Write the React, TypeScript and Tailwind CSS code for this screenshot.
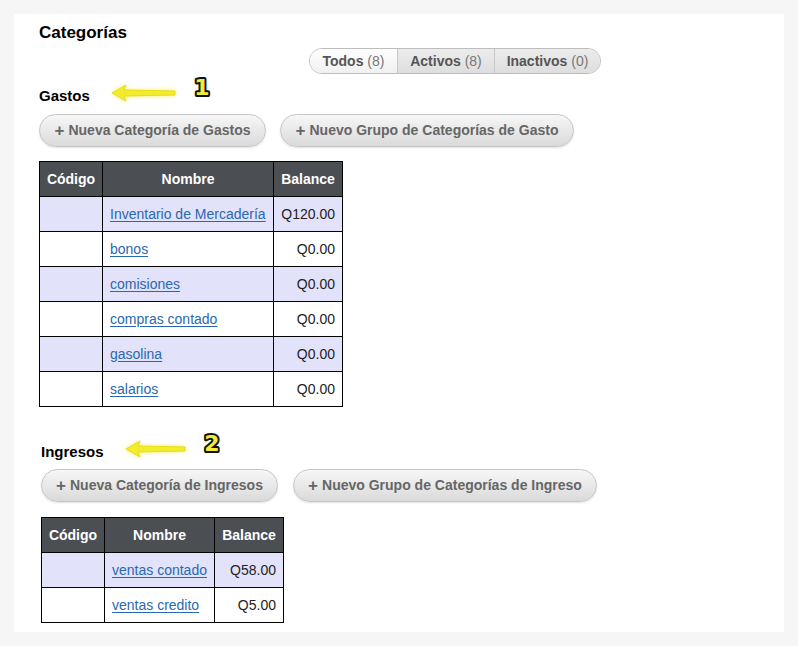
const font = { fontFamily: '"Liberation Sans", Arial, sans-serif' };

type Row = { nombre: string; balance: string };

const gastos: Row[] = [
  { nombre: "Inventario de Mercadería", balance: "Q120.00" },
  { nombre: "bonos", balance: "Q0.00" },
  { nombre: "comisiones", balance: "Q0.00" },
  { nombre: "compras contado", balance: "Q0.00" },
  { nombre: "gasolina", balance: "Q0.00" },
  { nombre: "salarios", balance: "Q0.00" },
];

const ingresos: Row[] = [
  { nombre: "ventas contado", balance: "Q58.00" },
  { nombre: "ventas credito", balance: "Q5.00" },
];

function Arrow({ label, width }: { label: string; width: number }) {
  return (
    <div className="flex items-center">
      <svg width={width} height="22" viewBox={`0 0 ${width} 22`} className="[filter:drop-shadow(0_0_2px_#f4ee60)]">
        <path
          d={`M2 11 L16 3 L14 8 L${width - 3} 9 L${width - 3} 13 L14 14 L16 19 Z`}
          fill="#f3ec2c"
          stroke="#e8dc1c"
          strokeWidth="1"
          strokeLinejoin="round"
        />
      </svg>
      <svg width="24" height="26" viewBox="0 0 24 26" className="ml-[12px] -mt-[12px]">
        <text
          x="12"
          y="21"
          textAnchor="middle"
          fontFamily='"DejaVu Sans", "Liberation Sans", sans-serif'
          fontWeight="bold"
          fontSize="22"
          fill="#f3ea3a"
          stroke="#111"
          strokeWidth="4"
          paintOrder="stroke"
          strokeLinejoin="round"
        >
          {label}
        </text>
      </svg>
    </div>
  );
}

function ActionButton({ children, w }: { children: React.ReactNode; w: string }) {
  return (
    <button
      className={`${w} h-[33px] rounded-full border border-[#c6c6c6] bg-gradient-to-b from-[#f7f7f7] to-[#dadada] text-[14px] font-bold text-[#666] shadow-[0_1px_2px_rgba(0,0,0,0.12)] flex items-center justify-center`}
    >
      <span className="text-[17px] leading-none mr-[4px] -mt-[1px]">+</span>
      {children}
    </button>
  );
}

function CatTable({ rows, nombreW }: { rows: Row[]; nombreW: string }) {
  return (
    <table className="border-collapse text-[14px]">
      <thead>
        <tr className="bg-[#4b4f54] text-white h-[35px]">
          <th className="w-[63px] border border-black font-bold px-[5px]">Código</th>
          <th className={`${nombreW} border border-black font-bold`}>Nombre</th>
          <th className="w-[69px] border border-black font-bold px-[6px]">Balance</th>
        </tr>
      </thead>
      <tbody>
        {rows.map((r, i) => (
          <tr key={r.nombre} className={`h-[35px] ${i % 2 === 0 ? "bg-[#e2e2fb]" : "bg-white"}`}>
            <td className="border border-black"></td>
            <td className="border border-black px-[7px]">
              <a href="#" className="text-[#2a69ad] underline underline-offset-[2px]">
                {r.nombre}
              </a>
            </td>
            <td className="border border-black px-[7px] text-right text-[#222]">{r.balance}</td>
          </tr>
        ))}
      </tbody>
    </table>
  );
}

export default function App() {
  return (
    <div className="min-h-[646px] bg-[#f6f6f6] pt-[14px] pl-[14px]" style={font}>
      <div className="w-[770px] h-[618px] bg-white pl-[25px] pt-[9px]">
        {/* Title */}
        <h1 className="text-[17px] font-bold text-black leading-[20px]">Categorías</h1>

        {/* Filter */}
        <div className="ml-[270px] mt-[5px] flex h-[26px] w-[292px] rounded-full border border-[#bdbdbd] overflow-hidden text-[14px] text-[#555]">
          <div className="w-[88px] flex items-center justify-center bg-gradient-to-b from-white to-[#f0f0f0] border-r border-[#c8c8c8]">
            <b>Todos</b>&nbsp;<span className="text-[#777]">(8)</span>
          </div>
          <div className="w-[97px] flex items-center justify-center bg-gradient-to-b from-[#ececec] to-[#dedede] border-r border-[#c8c8c8]">
            <b>Activos</b>&nbsp;<span className="text-[#777]">(8)</span>
          </div>
          <div className="flex-1 flex items-center justify-center bg-gradient-to-b from-[#ececec] to-[#dedede]">
            <b>Inactivos</b>&nbsp;<span className="text-[#777]">(0)</span>
          </div>
        </div>

        {/* Gastos */}
        <div className="mt-[3px] flex items-end h-[28px]">
          <h2 className="text-[15px] font-bold text-black leading-[18px]">Gastos</h2>
          <div className="ml-[20px] mb-[1px]">
            <Arrow label="1" width={68} />
          </div>
        </div>
        <div className="mt-[9px] flex gap-[14px]">
          <ActionButton w="w-[227px]">Nueva Categoría de Gastos</ActionButton>
          <ActionButton w="w-[294px]">Nuevo Grupo de Categorías de Gasto</ActionButton>
        </div>
        <div className="mt-[14px]">
          <CatTable rows={gastos} nombreW="w-[171px]" />
        </div>

        {/* Ingresos */}
        <div className="ml-[2px]">
          <div className="mt-[26px] flex items-end h-[28px]">
            <h2 className="text-[15px] font-bold text-black leading-[18px]">Ingresos</h2>
            <div className="ml-[20px] mb-[1px]">
              <Arrow label="2" width={64} />
            </div>
          </div>
          <div className="mt-[8px] flex gap-[15px]">
            <ActionButton w="w-[237px]">Nueva Categoría de Ingresos</ActionButton>
            <ActionButton w="w-[304px]">Nuevo Grupo de Categorías de Ingreso</ActionButton>
          </div>
          <div className="mt-[15px]">
            <CatTable rows={ingresos} nombreW="w-[110px]" />
          </div>
        </div>
      </div>
    </div>
  );
}
